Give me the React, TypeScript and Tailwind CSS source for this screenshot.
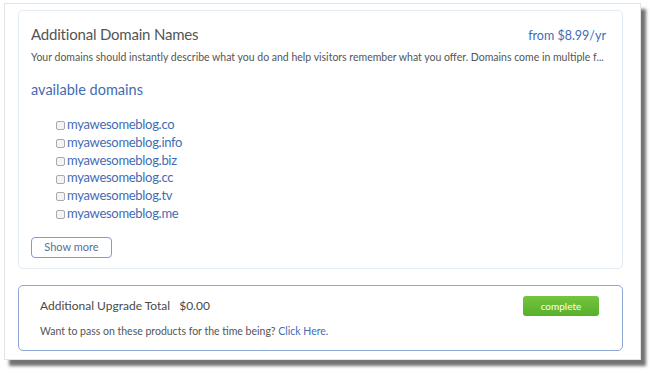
const domains = [
  'myawesomeblog.co',
  'myawesomeblog.info',
  'myawesomeblog.biz',
  'myawesomeblog.cc',
  'myawesomeblog.tv',
  'myawesomeblog.me',
];

export default function App() {
  return (
    <div className="w-[650px] h-[373px] bg-white pt-[3px] pl-[4px] font-['Lato',sans-serif]">
      <div className="w-[637px] h-[357px] bg-white border border-[#e4e4e4] shadow-[5px_6px_3px_rgba(0,0,0,0.55)] pt-[6px] pl-[13px]">
        <div className="w-[605px] h-[259px] border border-[#e3ebf3] rounded-[5px] pl-[12px] pr-[16px] pt-[13px]">
          <div className="flex items-baseline justify-between">
            <h2 className="text-[15px] text-[#555] tracking-[-0.2px] leading-[21px]">Additional Domain Names</h2>
            <span className="text-[12.5px] text-[#3f6cb5]">from $8.99/yr</span>
          </div>
          <p className="mt-[4px] text-[10.5px] text-[#555] leading-[15px] whitespace-nowrap">
            Your domains should instantly describe what you do and help visitors remember what you offer. Domains come in multiple f...
          </p>
          <h3 className="mt-[15px] text-[14.5px] text-[#3f6cb5] leading-[20px]">available domains</h3>
          <ul className="mt-[16px] pl-[25px] flex flex-col">
            {domains.map((d) => (
              <li key={d} className="flex items-center h-[17.8px]">
                <span className="w-[9px] h-[9px] border border-[#a9a9a9] rounded-[2px] bg-[#f4f4f4] mr-[2px] mt-[2px]" />
                <span className="text-[13px] text-[#3f6cb5] tracking-[-0.3px]">{d}</span>
              </li>
            ))}
          </ul>
          <button className="mt-[14px] w-[81px] h-[21px] border border-[#7f9ccf] rounded-[4px] text-[11px] text-[#5a6f96] bg-white">
            Show more
          </button>
        </div>
        <div className="mt-[16px] w-[605px] h-[66px] border border-[#8ea8d5] rounded-[5px] pl-[21px] pr-[23px] pt-[10px]">
          <div className="flex items-center justify-between">
            <span className="text-[12px] text-[#4a4a4a]">
              Additional Upgrade Total <span className="ml-[6px]">$0.00</span>
            </span>
            <button className="w-[76px] h-[20px] rounded-[3px] bg-gradient-to-b from-[#74c43e] to-[#57b02a] text-white text-[10px]">
              complete
            </button>
          </div>
          <p className="mt-[8px] text-[10.5px] text-[#555]">
            Want to pass on these products for the time being? <span className="text-[#3f6cb5]">Click Here.</span>
          </p>
        </div>
      </div>
    </div>
  );
}
